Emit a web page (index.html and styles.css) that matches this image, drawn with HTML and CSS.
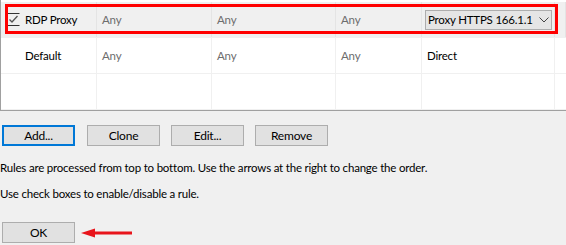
FILE: index.html
```html
<!DOCTYPE html>
<html lang="en">
<head>
    <meta charset="UTF-8">
    <title>Proxification Rules</title>
    <link rel="stylesheet" href="styles.css">
</head>
<body>

    <div class="rules">
        <div class="row row-selected">
            <div class="cell cell-name">
                <svg class="check" width="13" height="13" viewBox="0 0 13 13">
                    <path d="M12.5 0.5 H0.5 V12.5 H12.5" fill="none" stroke="#333" stroke-width="1"/>
                    <path d="M2.5 6.5 L5 9 L10.5 3" fill="none" stroke="#555" stroke-width="1.3"/>
                </svg>
                <span>RDP Proxy</span>
            </div>
            <div class="cell muted">Any</div>
            <div class="cell muted">Any</div>
            <div class="cell muted">Any</div>
            <div class="cell cell-action">
                <div class="combo">
                    <span class="combo-text">Proxy HTTPS 166.1.1</span>
                    <svg class="chevron" width="10" height="6" viewBox="0 0 10 6">
                        <path d="M0.5 0.5 L5 5 L9.5 0.5" fill="none" stroke="#444" stroke-width="1"/>
                    </svg>
                </div>
            </div>
            <div class="cell"></div>
            <div class="highlight"></div>
        </div>
        <div class="row">
            <div class="cell cell-name"><span class="indent">Default</span></div>
            <div class="cell muted">Any</div>
            <div class="cell muted">Any</div>
            <div class="cell muted">Any</div>
            <div class="cell">Direct</div>
            <div class="cell"></div>
        </div>
        <div class="row">
            <div class="cell"></div>
            <div class="cell"></div>
            <div class="cell"></div>
            <div class="cell"></div>
            <div class="cell"></div>
            <div class="cell"></div>
        </div>
    </div>

    <div class="toolbar">
        <button class="btn btn-default">Add...</button>
        <button class="btn">Clone</button>
        <button class="btn">Edit...</button>
        <button class="btn">Remove</button>
    </div>

    <p class="note">Rules are processed from top to bottom. Use the arrows at the right to change the order.</p>
    <p class="note">Use check boxes to enable/disable a rule.</p>

    <div class="footer">
        <button class="btn">OK</button>
        <svg class="arrow" width="52" height="10" viewBox="0 0 52 10">
            <path d="M12 5 H51" stroke="#e8141b" stroke-width="3"/>
            <path d="M0 5 L14 0.5 L14 9.5 Z" fill="#e8141b"/>
        </svg>
    </div>

</body>
</html>
```

FILE: styles.css
```css
body {
    font-family: Lato, "Noto Sans", sans-serif;
    font-size: 11.5px;
    letter-spacing: -0.2px;
    color: #000;
    background-color: #f0f0f0;
    margin: 0;
    width: 566px;
    height: 245px;
    overflow: hidden;
}

/* Rules list */
.rules {
    background: white;
    border-left: 1px solid #a0a0a0;
    border-bottom: 1px solid #a0a0a0;
    padding-top: 2px;
    height: 108px;
}

.row {
    position: relative;
    display: grid;
    grid-template-columns: 96px 115px 124px 86px 133px 11px;
    height: 35px;
    border-bottom: 1px solid #f0f0f0;
}

.row-selected {
    background-color: #f0f0f0;
}

.cell {
    display: flex;
    align-items: center;
    padding-left: 5px;
    border-right: 1px solid #f0f0f0;
    white-space: nowrap;
    overflow: hidden;
}

.cell:last-child { border-right: none; }
.row-selected .cell { border-right-color: #e4e4e4; }

.muted { color: #6d6d6d; }

.cell-name { padding-left: 6px; gap: 5px; }
.indent { padding-left: 18px; }

.check { flex: none; }

.cell-action { padding-left: 3px; }

.combo {
    display: flex;
    align-items: center;
    width: 127px;
    height: 20px;
    box-sizing: border-box;
    border: 1px solid #adadad;
    background-color: #e5e5e5;
    padding-left: 2px;
}

.combo-text {
    width: 106px;
    white-space: nowrap;
}

.chevron { margin-left: 5px; }

.highlight {
    position: absolute;
    left: 4px;
    top: 2px;
    width: 553px;
    height: 30px;
    box-sizing: border-box;
    border: 3px solid #ff0000;
    pointer-events: none;
}

/* Buttons */
.toolbar {
    display: flex;
    gap: 11px;
    padding: 14px 0 0 2px;
}

.btn {
    font-family: inherit;
    font-size: 12px;
    letter-spacing: inherit;
    width: 73px;
    height: 21px;
    padding: 0;
    background-color: #e1e1e1;
    border: 1px solid #adadad;
    color: #000;
}

.btn-default { border: 2px solid #0078d7; }

.toolbar .btn:nth-child(2) { margin-left: 1px; }

.note {
    margin: 0;
    line-height: 16px;
}

.toolbar + .note { margin-top: 14px; }
.note + .note { margin-top: 10px; }

.footer {
    display: flex;
    align-items: center;
    gap: 6px;
    padding: 20px 0 0 2px;
}
```
